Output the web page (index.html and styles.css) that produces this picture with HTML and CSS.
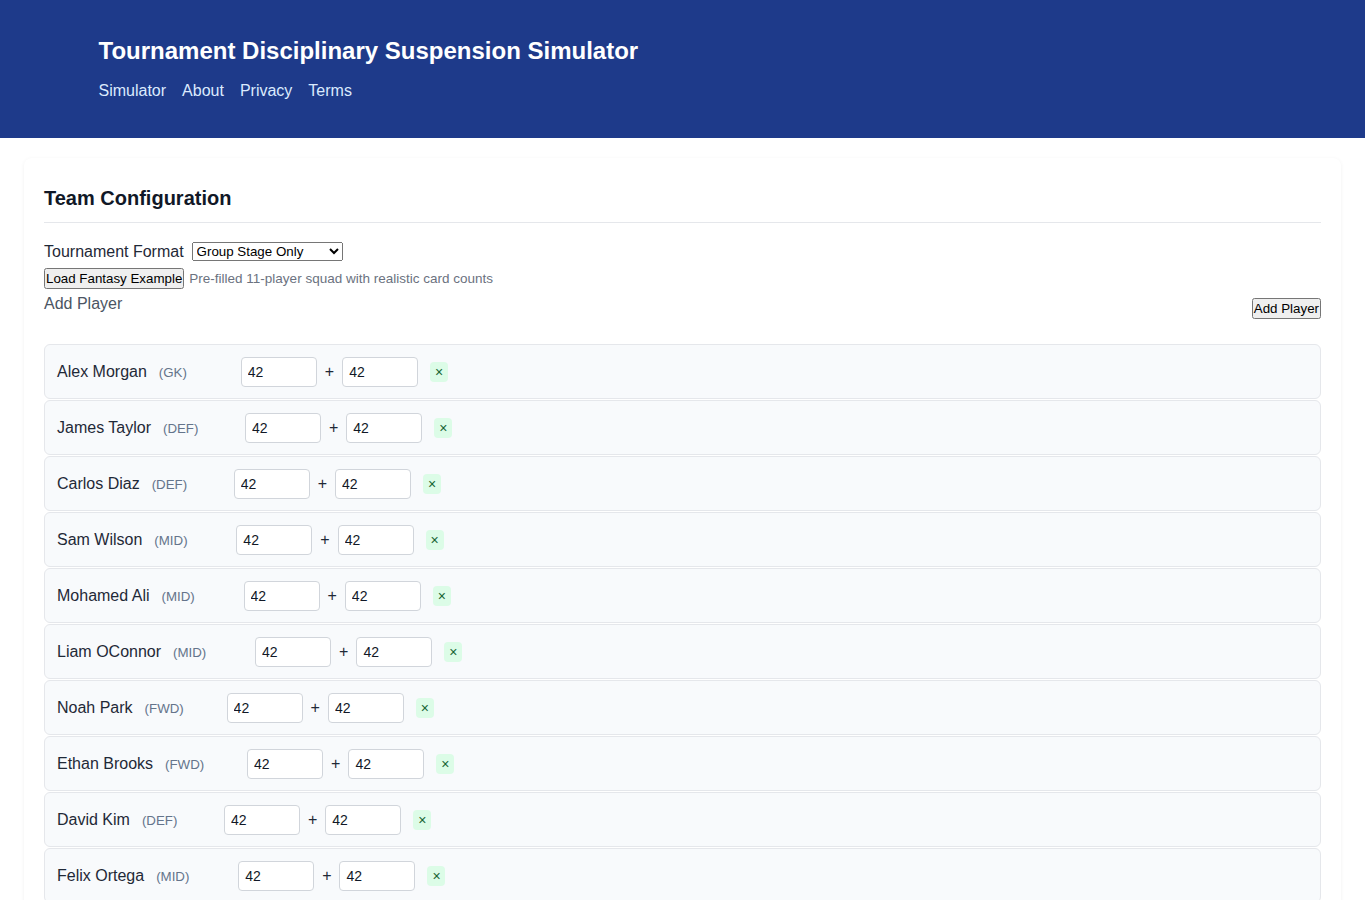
FILE: index.html
```html
<!DOCTYPE html>
<html lang="en">
<head>
  <meta charset="UTF-8">
  <meta name="viewport" content="width=device-width, initial-scale=1.0">
  <title>Tournament Disciplinary Suspension Simulator</title>
  <link rel="stylesheet" href="styles.css">
</head>
<body>
  <header class="site-header">
    <div class="wrap">
      <h1>Tournament Disciplinary Suspension Simulator</h1>
      <nav class="nav">
        <a href="#">Simulator</a>
        <a href="#">About</a>
        <a href="#">Privacy</a>
        <a href="#">Terms</a>
      </nav>
    </div>
  </header>

  <main class="main">
    <section class="card">
      <h2>Team Configuration</h2>

      <div class="format-row">
        <label for="format">Tournament Format</label>
        <select id="format">
          <option>Group Stage Only</option>
          <option>Group + Knockout</option>
          <option>Knockout Only</option>
        </select>
      </div>

      <div class="example-row">
        <button>Load Fantasy Example</button>
        <span class="hint">Pre-filled 11-player squad with realistic card counts</span>
      </div>

      <div class="add-row">
        <div class="add-title">Add Player</div>
        <button class="add-btn">Add Player</button>
      </div>

      <div class="player-list">
        <div class="player">
          <span class="name">Alex Morgan</span><span class="pos">(GK)</span>
          <div class="cards"><input type="text" value="42"><span class="plus">+</span><input type="text" value="42"></div>
          <button class="remove">×</button>
        </div>
        <div class="player">
          <span class="name">James Taylor</span><span class="pos">(DEF)</span>
          <div class="cards"><input type="text" value="42"><span class="plus">+</span><input type="text" value="42"></div>
          <button class="remove">×</button>
        </div>
        <div class="player">
          <span class="name">Carlos Diaz</span><span class="pos">(DEF)</span>
          <div class="cards"><input type="text" value="42"><span class="plus">+</span><input type="text" value="42"></div>
          <button class="remove">×</button>
        </div>
        <div class="player">
          <span class="name">Sam Wilson</span><span class="pos">(MID)</span>
          <div class="cards"><input type="text" value="42"><span class="plus">+</span><input type="text" value="42"></div>
          <button class="remove">×</button>
        </div>
        <div class="player">
          <span class="name">Mohamed Ali</span><span class="pos">(MID)</span>
          <div class="cards"><input type="text" value="42"><span class="plus">+</span><input type="text" value="42"></div>
          <button class="remove">×</button>
        </div>
        <div class="player">
          <span class="name">Liam OConnor</span><span class="pos">(MID)</span>
          <div class="cards"><input type="text" value="42"><span class="plus">+</span><input type="text" value="42"></div>
          <button class="remove">×</button>
        </div>
        <div class="player">
          <span class="name">Noah Park</span><span class="pos">(FWD)</span>
          <div class="cards"><input type="text" value="42"><span class="plus">+</span><input type="text" value="42"></div>
          <button class="remove">×</button>
        </div>
        <div class="player">
          <span class="name">Ethan Brooks</span><span class="pos">(FWD)</span>
          <div class="cards"><input type="text" value="42"><span class="plus">+</span><input type="text" value="42"></div>
          <button class="remove">×</button>
        </div>
        <div class="player">
          <span class="name">David Kim</span><span class="pos">(DEF)</span>
          <div class="cards"><input type="text" value="42"><span class="plus">+</span><input type="text" value="42"></div>
          <button class="remove">×</button>
        </div>
        <div class="player">
          <span class="name">Felix Ortega</span><span class="pos">(MID)</span>
          <div class="cards"><input type="text" value="42"><span class="plus">+</span><input type="text" value="42"></div>
          <button class="remove">×</button>
        </div>
        <div class="player">
          <span class="name">Lucas Silva</span><span class="pos">(FWD)</span>
          <div class="cards"><input type="text" value="42"><span class="plus">+</span><input type="text" value="42"></div>
          <button class="remove">×</button>
        </div>
      </div>
    </section>
  </main>
</body>
</html>
```

FILE: styles.css
```css
body {
  font-family: 'Liberation Sans', Arial, sans-serif;
  background-color: #fff;
  color: #1f2937;
  margin: 0;
}
.site-header {
  background-color: #1e3a8a;
  color: #fff;
  padding: 36px 0 38px;
}
.wrap {
  box-sizing: border-box;
  max-width: 1200px;
  margin: 0 auto;
  padding: 0 16px;
}
.site-header h1 {
  font-size: 24px;
  line-height: 29px;
  margin: 0 0 17px;
}
.nav {
  display: flex;
  gap: 16px;
  font-size: 16px;
}
.nav a {
  color: #dbeafe;
  text-decoration: none;
}
.main {
  padding: 20px 24px;
}
.card {
  background: #fff;
  border-radius: 8px;
  box-shadow: 0 1px 4px rgba(0, 0, 0, 0.06);
  padding: 20px;
}
.card h2 {
  font-size: 20px;
  line-height: 24px;
  color: #111827;
  margin: 8px 0 19px;
  padding-bottom: 12px;
  border-bottom: 1px solid #e5e7eb;
}
.format-row {
  display: flex;
  align-items: center;
  gap: 8px;
  font-size: 16px;
}
.format-row select {
  width: 151px;
}
button {
  padding: 1px 0;
}
.example-row {
  margin-top: 7px;
  display: flex;
  align-items: center;
  gap: 5px;
}
.hint {
  font-size: 13.5px;
  color: #6b7280;
}
.add-row {
  display: flex;
  justify-content: space-between;
  align-items: flex-start;
  margin-top: 6px;
}
.add-title {
  font-size: 16px;
  color: #4b5563;
}
.add-btn {
  margin-top: 3px;
}
.player-list {
  margin-top: 25px;
}
.player {
  display: flex;
  align-items: center;
  background: #f8fafc;
  border: 1px solid #e5e7eb;
  border-radius: 6px;
  padding: 12px 12px 11px;
  margin-bottom: 1px;
  font-size: 16px;
}
.pos {
  margin-left: 12px;
  width: 70px;
  font-size: 13.3px;
  color: #64748b;
}
.cards {
  margin-left: 12px;
  display: flex;
  align-items: center;
  gap: 8px;
}
.cards input {
  width: 76px;
  height: 30px;
  box-sizing: border-box;
  padding: 4px 6px;
  border: 1px solid #d1d5db;
  border-radius: 4px;
  background: #fff;
  font-family: inherit;
  font-size: 14px;
  color: #111827;
}
.plus {
  font-size: 16px;
}
.player .remove {
  margin-left: 12px;
  width: 18px;
  height: 20px;
  padding: 0;
  border: none;
  border-radius: 4px;
  background: #dcfce7;
  color: #166534;
  font-size: 14px;
  cursor: pointer;
}
```
